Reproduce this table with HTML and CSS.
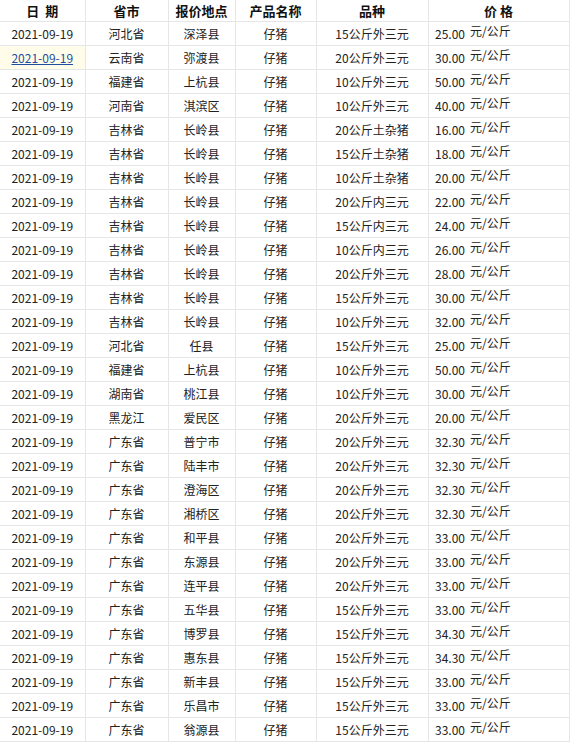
FILE: index.html
```html
<!DOCTYPE html>
<html lang="zh">
<head>
<meta charset="utf-8">
<link rel="stylesheet" href="styles.css">
</head>
<body>
<table class="grid">
<colgroup>
<col class="c-date"><col class="c-prov"><col class="c-place"><col class="c-prod"><col class="c-var"><col class="c-num"><col class="c-unit">
</colgroup>
<thead>
<tr><th>日&nbsp;&nbsp;期</th><th>省市</th><th>报价地点</th><th>产品名称</th><th>品种</th><th colspan="2">价&nbsp;格</th></tr>
</thead>
<tbody>
<tr><td>2021-09-19</td><td>河北省</td><td>深泽县</td><td>仔猪</td><td>15公斤外三元</td><td class="num">25.00</td><td class="unit">元/公斤</td></tr>
<tr><td class="hl"><a href="#">2021-09-19</a></td><td>云南省</td><td>弥渡县</td><td>仔猪</td><td>20公斤外三元</td><td class="num">30.00</td><td class="unit">元/公斤</td></tr>
<tr><td>2021-09-19</td><td>福建省</td><td>上杭县</td><td>仔猪</td><td>10公斤外三元</td><td class="num">50.00</td><td class="unit">元/公斤</td></tr>
<tr><td>2021-09-19</td><td>河南省</td><td>淇滨区</td><td>仔猪</td><td>10公斤外三元</td><td class="num">40.00</td><td class="unit">元/公斤</td></tr>
<tr><td>2021-09-19</td><td>吉林省</td><td>长岭县</td><td>仔猪</td><td>20公斤土杂猪</td><td class="num">16.00</td><td class="unit">元/公斤</td></tr>
<tr><td>2021-09-19</td><td>吉林省</td><td>长岭县</td><td>仔猪</td><td>15公斤土杂猪</td><td class="num">18.00</td><td class="unit">元/公斤</td></tr>
<tr><td>2021-09-19</td><td>吉林省</td><td>长岭县</td><td>仔猪</td><td>10公斤土杂猪</td><td class="num">20.00</td><td class="unit">元/公斤</td></tr>
<tr><td>2021-09-19</td><td>吉林省</td><td>长岭县</td><td>仔猪</td><td>20公斤内三元</td><td class="num">22.00</td><td class="unit">元/公斤</td></tr>
<tr><td>2021-09-19</td><td>吉林省</td><td>长岭县</td><td>仔猪</td><td>15公斤内三元</td><td class="num">24.00</td><td class="unit">元/公斤</td></tr>
<tr><td>2021-09-19</td><td>吉林省</td><td>长岭县</td><td>仔猪</td><td>10公斤内三元</td><td class="num">26.00</td><td class="unit">元/公斤</td></tr>
<tr><td>2021-09-19</td><td>吉林省</td><td>长岭县</td><td>仔猪</td><td>20公斤外三元</td><td class="num">28.00</td><td class="unit">元/公斤</td></tr>
<tr><td>2021-09-19</td><td>吉林省</td><td>长岭县</td><td>仔猪</td><td>15公斤外三元</td><td class="num">30.00</td><td class="unit">元/公斤</td></tr>
<tr><td>2021-09-19</td><td>吉林省</td><td>长岭县</td><td>仔猪</td><td>10公斤外三元</td><td class="num">32.00</td><td class="unit">元/公斤</td></tr>
<tr><td>2021-09-19</td><td>河北省</td><td>任县</td><td>仔猪</td><td>15公斤外三元</td><td class="num">25.00</td><td class="unit">元/公斤</td></tr>
<tr><td>2021-09-19</td><td>福建省</td><td>上杭县</td><td>仔猪</td><td>10公斤外三元</td><td class="num">50.00</td><td class="unit">元/公斤</td></tr>
<tr><td>2021-09-19</td><td>湖南省</td><td>桃江县</td><td>仔猪</td><td>10公斤外三元</td><td class="num">30.00</td><td class="unit">元/公斤</td></tr>
<tr><td>2021-09-19</td><td>黑龙江</td><td>爱民区</td><td>仔猪</td><td>20公斤外三元</td><td class="num">20.00</td><td class="unit">元/公斤</td></tr>
<tr><td>2021-09-19</td><td>广东省</td><td>普宁市</td><td>仔猪</td><td>20公斤外三元</td><td class="num">32.30</td><td class="unit">元/公斤</td></tr>
<tr><td>2021-09-19</td><td>广东省</td><td>陆丰市</td><td>仔猪</td><td>20公斤外三元</td><td class="num">32.30</td><td class="unit">元/公斤</td></tr>
<tr><td>2021-09-19</td><td>广东省</td><td>澄海区</td><td>仔猪</td><td>20公斤外三元</td><td class="num">32.30</td><td class="unit">元/公斤</td></tr>
<tr><td>2021-09-19</td><td>广东省</td><td>湘桥区</td><td>仔猪</td><td>20公斤外三元</td><td class="num">32.30</td><td class="unit">元/公斤</td></tr>
<tr><td>2021-09-19</td><td>广东省</td><td>和平县</td><td>仔猪</td><td>20公斤外三元</td><td class="num">33.00</td><td class="unit">元/公斤</td></tr>
<tr><td>2021-09-19</td><td>广东省</td><td>东源县</td><td>仔猪</td><td>20公斤外三元</td><td class="num">33.00</td><td class="unit">元/公斤</td></tr>
<tr><td>2021-09-19</td><td>广东省</td><td>连平县</td><td>仔猪</td><td>20公斤外三元</td><td class="num">33.00</td><td class="unit">元/公斤</td></tr>
<tr><td>2021-09-19</td><td>广东省</td><td>五华县</td><td>仔猪</td><td>15公斤外三元</td><td class="num">33.00</td><td class="unit">元/公斤</td></tr>
<tr><td>2021-09-19</td><td>广东省</td><td>博罗县</td><td>仔猪</td><td>15公斤外三元</td><td class="num">34.30</td><td class="unit">元/公斤</td></tr>
<tr><td>2021-09-19</td><td>广东省</td><td>惠东县</td><td>仔猪</td><td>15公斤外三元</td><td class="num">34.30</td><td class="unit">元/公斤</td></tr>
<tr><td>2021-09-19</td><td>广东省</td><td>新丰县</td><td>仔猪</td><td>15公斤外三元</td><td class="num">33.00</td><td class="unit">元/公斤</td></tr>
<tr><td>2021-09-19</td><td>广东省</td><td>乐昌市</td><td>仔猪</td><td>15公斤外三元</td><td class="num">33.00</td><td class="unit">元/公斤</td></tr>
<tr><td>2021-09-19</td><td>广东省</td><td>翁源县</td><td>仔猪</td><td>15公斤外三元</td><td class="num">33.00</td><td class="unit">元/公斤</td></tr>
</tbody>
</table>
</body>
</html>
```
FILE: styles.css
```css
html, body {
  margin: 0;
  padding: 0;
  background: #fff;
}
body {
  font-family: "Noto Sans CJK SC", "Liberation Sans", sans-serif;
  font-size: 12px;
  color: #222;
}
.grid {
  border-collapse: collapse;
  table-layout: fixed;
  width: 569px;
}
.c-date { width: 85px; }
.c-prov { width: 83px; }
.c-place { width: 67px; }
.c-prod { width: 81px; }
.c-var { width: 112px; }
.c-num { width: 40px; }
.c-unit { width: 101px; }
.grid th, .grid td {
  border-right: 1px solid #e6e6e6;
  border-bottom: 1px solid #e6e6e6;
  padding: 0;
  text-align: center;
  white-space: nowrap;
  overflow: hidden;
}
.grid th {
  height: 21px;
  line-height: 21px;
  font-size: 13px;
  font-weight: bold;
  color: #111;
}
.grid td {
  height: 23px;
  line-height: 23px;
}
.grid td.num {
  text-align: right;
  padding-right: 3px;
  border-right: none;
}
.grid td.unit {
  text-align: left;
  padding-left: 2px;
  line-height: 16px;
  vertical-align: top;
  padding-top: 1px;
  height: 22px;
}
.grid td.hl {
  background: #fffdea;
}
.grid a {
  color: #1f4ea3;
  text-decoration: underline;
}
```
